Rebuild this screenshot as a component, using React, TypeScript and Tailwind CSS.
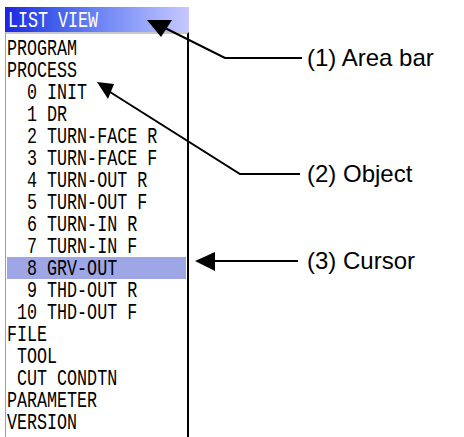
import React from "react";

type Row = { t: string; sel?: boolean };

const rows: Row[] = [
  { t: "PROGRAM" },
  { t: "PROCESS" },
  { t: "  0 INIT" },
  { t: "  1 DR" },
  { t: "  2 TURN-FACE R" },
  { t: "  3 TURN-FACE F" },
  { t: "  4 TURN-OUT R" },
  { t: "  5 TURN-OUT F" },
  { t: "  6 TURN-IN R" },
  { t: "  7 TURN-IN F" },
  { t: "  8 GRV-OUT", sel: true },
  { t: "  9 THD-OUT R" },
  { t: " 10 THD-OUT F" },
  { t: "FILE" },
  { t: " TOOL" },
  { t: " CUT CONDTN" },
  { t: "PARAMETER" },
  { t: "VERSION" },
];

const mono = { fontFamily: '"Liberation Mono", "DejaVu Sans Mono", monospace' };
const sans = { fontFamily: '"Liberation Sans", Arial, sans-serif' };

export default function App() {
  return (
    <div className="relative w-[464px] h-[437px] bg-white overflow-hidden flex">
      <div className="ml-[5px] pt-[7px] w-[184px] h-[437px] flex flex-col shrink-0">
        <div className="h-[25px] bg-gradient-to-r from-[#2020e0] to-[#c8c8ff] pl-[3px] pt-[2px] flex items-center">
          <span
            className="inline-block whitespace-pre origin-left scale-x-[0.732] text-[22.8px] leading-[20px] text-white"
            style={mono}
          >
            LIST VIEW
          </span>
        </div>
        <div className="flex-1 border-t-2 border-t-[#c8c8c8] border-l border-l-[#a0a0a0] border-r-2 border-r-black pt-[3px] overflow-hidden">
          {rows.map((r, i) => (
            <div
              key={i}
              className={`ml-[1px] mr-[1px] h-[22px] pt-[2px] ${r.sel ? "bg-[#9ea6e6]" : ""}`}
            >
              <span
                className="block whitespace-pre origin-left scale-x-[0.732] text-[22.8px] leading-[20px] text-black"
                style={mono}
              >
                {r.t}
              </span>
            </div>
          ))}
        </div>
      </div>

      <div
        className="ml-[118px] pt-[44px] flex flex-col text-[24px] leading-[28px] text-black whitespace-nowrap"
        style={sans}
      >
        <div>(1) Area bar</div>
        <div className="mt-[88px]">(2) Object</div>
        <div className="mt-[59px]">(3) Cursor</div>
      </div>

      <svg
        className="absolute inset-0 pointer-events-none"
        width="464"
        height="437"
        viewBox="0 0 464 437"
      >
        <g stroke="black" strokeWidth="2" fill="none">
          <polyline points="165,28 225,58 302,58" />
          <polyline points="110,92 240,174 300,174" />
          <line x1="210" y1="261" x2="298" y2="261" />
        </g>
        <g fill="black">
          <polygon points="147,20 172,20 161,37" />
          <polygon points="97,82 114,84 108,99" />
          <polygon points="195,261 215,252 215,271" />
        </g>
      </svg>
    </div>
  );
}
